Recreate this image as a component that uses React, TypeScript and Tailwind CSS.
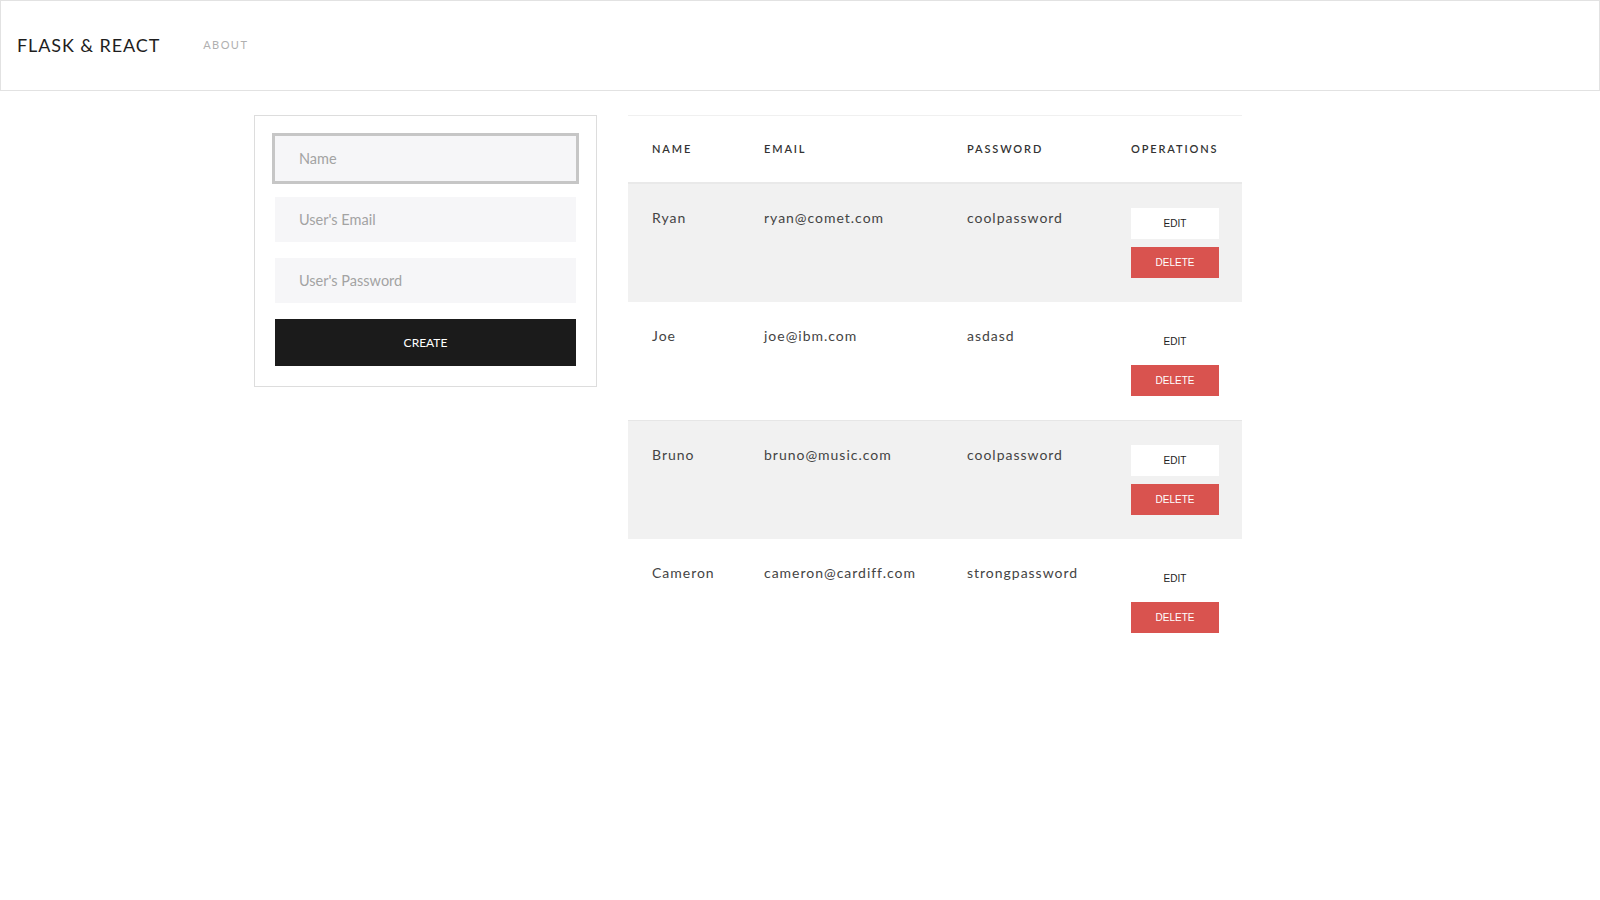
import { useState } from "react";

type User = { name: string; email: string; password: string };

const users: User[] = [
	{ name: "Ryan", email: "ryan@comet.com", password: "coolpassword" },
	{ name: "Joe", email: "joe@ibm.com", password: "asdasd" },
	{ name: "Bruno", email: "bruno@music.com", password: "coolpassword" },
	{ name: "Cameron", email: "cameron@cardiff.com", password: "strongpassword" },
];

function UserForm() {
	const [name, setName] = useState("");
	const [email, setEmail] = useState("");
	const [password, setPassword] = useState("");

	return (
		<div className="w-[343px] border border-[#dddddd] p-5 self-start">
			<input
				value={name}
				onChange={(e) => setName(e.target.value)}
				placeholder="Name"
				className="block w-full h-[45px] bg-[#f6f6f8] pl-6 text-[14.5px] text-[#333] placeholder:text-[#a3a3a3] outline-[3px] outline-solid outline-[#c6c6c6] mb-4"
			/>
			<input
				value={email}
				onChange={(e) => setEmail(e.target.value)}
				placeholder="User's Email"
				className="block w-full h-[45px] bg-[#f6f6f8] pl-6 text-[14.5px] text-[#333] placeholder:text-[#a3a3a3] outline-none mb-4"
			/>
			<input
				value={password}
				onChange={(e) => setPassword(e.target.value)}
				placeholder="User's Password"
				className="block w-full h-[45px] bg-[#f6f6f8] pl-6 text-[14.5px] text-[#333] placeholder:text-[#a3a3a3] outline-none mb-4"
			/>
			<button className="block w-full h-[47px] bg-[#1b1b1b] text-white text-xs">
				CREATE
			</button>
		</div>
	);
}

function UserTable() {
	return (
		<table className="w-[614px] table-fixed border-t border-[#f0f0f0] border-collapse text-left self-start">
			<thead>
				<tr className="border-b-2 border-[#e9e9e9]">
					<th className="w-[112px] h-[67px] pl-6 text-[11px] font-semibold tracking-[0.17em] text-[#333]">NAME</th>
					<th className="w-[203px] pl-6 text-[11px] font-semibold tracking-[0.17em] text-[#333]">EMAIL</th>
					<th className="w-[164px] pl-6 text-[11px] font-semibold tracking-[0.17em] text-[#333]">PASSWORD</th>
					<th className="w-[135px] pl-6 text-[11px] font-semibold tracking-[0.17em] text-[#333] whitespace-nowrap">OPERATIONS</th>
				</tr>
			</thead>
			<tbody>
				{users.map((u, i) => (
					<tr key={u.email} className={i % 2 === 0 ? "bg-[#f1f1f1] border-t border-[#e6e6e6]" : "bg-white"}>
						<td className="align-top pl-6 pt-6 text-sm leading-5 tracking-[0.07em] text-[#444]">{u.name}</td>
						<td className="align-top pl-6 pt-6 text-sm leading-5 tracking-[0.07em] text-[#444]">{u.email}</td>
						<td className="align-top pl-6 pt-6 text-sm leading-5 tracking-[0.07em] text-[#444]">{u.password}</td>
						<td className="align-top px-6 py-6">
							<button
								className={
									i % 2 === 0
										? "block w-[88px] h-[31px] bg-white text-[10px] text-[#222] font-['Liberation_Sans',sans-serif]"
										: "block w-[88px] h-[31px] bg-transparent text-[10px] text-[#222] font-['Liberation_Sans',sans-serif]"
								}
							>
								EDIT
							</button>
							<button className="block w-[88px] h-[31px] mt-2 bg-[#d9534f] text-[10px] text-white font-['Liberation_Sans',sans-serif]">
								DELETE
							</button>
						</td>
					</tr>
				))}
			</tbody>
		</table>
	);
}

export default function App() {
	return (
		<div className="min-h-screen bg-white font-['Lato','Open_Sans',sans-serif]">
			<header className="h-[91px] border border-[#e2e2e2] flex items-center pl-4">
				<span className="text-[18px] tracking-[0.05em] text-[#1e1e1e]">FLASK &amp; REACT</span>
				<a href="#" className="ml-[43px] text-[11px] tracking-[0.13em] text-[#b0b0b0]">
					ABOUT
				</a>
			</header>
			<main className="flex gap-[31px] ml-[254px] mt-[24px]">
				<UserForm />
				<UserTable />
			</main>
		</div>
	);
}
